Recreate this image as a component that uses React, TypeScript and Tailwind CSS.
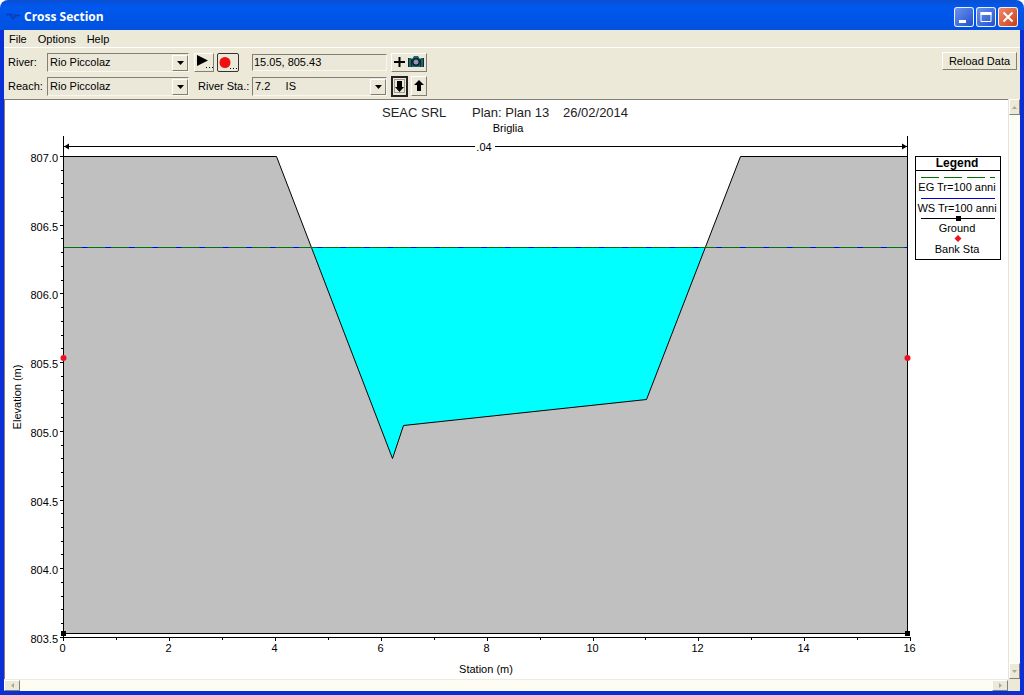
import React, { useState } from "react";

type Point = [number, number];

// station (m) -> x, elevation (m) -> y
const sx = (station: number) => Math.round(63 + station * 52.95) + 0.5;
const sy = (elevation: number) => Math.round(156 + (807 - elevation) * 137.4) + 0.5;

const ground: Point[] = [
  [63.5, 156.5],
  [276.5, 156.5],
  [392.5, 458.5],
  [403.5, 425.5],
  [646.5, 399.5],
  [740.5, 156.5],
  [907.5, 156.5],
];

const water: Point[] = [
  [311.5, 247.5],
  [392.5, 458.5],
  [403.5, 425.5],
  [646.5, 399.5],
  [705.5, 247.5],
];

const toPoints = (pts: Point[]) => pts.map((p) => p.join(",")).join(" ");

const elevations = Array.from({ length: 36 }, (_, i) => 803.5 + i / 10);
const stations = Array.from({ length: 17 }, (_, i) => i);

const raised = "border border-t-white border-l-white border-r-[#808076] border-b-[#808076] bg-[#ece9d8]";
const sunken = "border border-t-[#808076] border-l-[#808076] border-r-[#f8f7f0] border-b-[#f8f7f0] bg-[#ebe8d9]";

function Dropdown({ id, options }: { id: string; options: string[] }) {
  return (
    <div className="relative h-[19px] w-full">
      <select
        id={id}
        className={`h-full w-full appearance-none pl-[2px] pr-5 text-[11px] leading-4 outline-none ${sunken}`}
      >
        {options.map((o) => (
          <option key={o}>{o}</option>
        ))}
      </select>
      <span
        className={`pointer-events-none absolute top-[2px] right-[1px] bottom-[1px] flex w-4 items-center justify-center ${raised}`}
      >
        <svg width="7" height="4" viewBox="0 0 7 4" aria-hidden="true">
          <path d="M0 0h7L3.5 4z" fill="#000" />
        </svg>
      </span>
    </div>
  );
}

function TitleBar() {
  const caption = "flex h-5 w-5 items-center justify-center rounded-[3px] border border-white/90";
  return (
    <header className="flex h-[30px] items-center justify-between rounded-t-lg bg-linear-to-b from-[#0a4fd0] via-[#0058ee] via-20% to-[#0052e0] pt-[3px] pr-[6px] pl-[6px]">
      <div className="flex items-center gap-1">
        <svg width="14" height="10" viewBox="0 0 14 10" aria-hidden="true">
          <path d="M0 2.500h4l3 4 3-3h4" fill="none" stroke="#0a3cb8" strokeWidth="1.5" />
          <path d="M4 3h7" stroke="#0a3cb8" />
        </svg>
        <h1 className="font-['Open_Sans','Noto_Sans',sans-serif] text-xs font-bold text-white">Cross Section</h1>
      </div>
      <div className="flex gap-[2px]">
        <button aria-label="Minimize" className={`${caption} bg-linear-to-br from-[#6d92ee] to-[#1d50cc]`}>
          <svg width="18" height="18" viewBox="0 0 18 18">
            <path d="M4 12h7v3H4z" fill="#fff" />
          </svg>
        </button>
        <button aria-label="Maximize" className={`${caption} bg-linear-to-br from-[#6d92ee] to-[#1d50cc]`}>
          <svg width="18" height="18" viewBox="0 0 18 18">
            <path d="M4 4.5h10v9H4z" fill="none" stroke="#fff" />
            <path d="M3.500 4h11v3h-11z" fill="#fff" />
          </svg>
        </button>
        <button aria-label="Close" className={`${caption} bg-linear-to-br from-[#ec8a6c] to-[#cc3a12]`}>
          <svg width="18" height="18" viewBox="0 0 18 18">
            <path d="M4.500 4.500l9 9M13.500 4.500l-9 9" stroke="#fff" strokeWidth="2" />
          </svg>
        </button>
      </div>
    </header>
  );
}

function Toolbar() {
  const [cursor, setCursor] = useState("15.05, 805.43");

  return (
    <div className="flex items-start justify-between border-t border-white pt-[2px] pr-[3px] pb-[1px] pl-1">
      <div className="grid auto-rows-[24px] grid-cols-[39px_142px_63px_135px_auto] items-center">
        <label htmlFor="river">River:</label>
        <Dropdown id="river" options={["Rio Piccolaz"]} />
        <div className="flex gap-[3px] pl-[5px]">
          <button aria-label="Play" className={`h-[19px] w-5 ${raised}`}>
            <svg width="18" height="17" viewBox="0 0 18 17">
              <path d="M2 1l11 5.500L2 12z" fill="#000" />
              <path d="M11 13.500h1M14 13.500h1M17 13.500h1" stroke="#000" />
            </svg>
          </button>
          <button
            aria-label="Record"
            className="h-[19px] w-[22px] rounded-[2px] border border-[#333] bg-[#ece9d8]"
          >
            <svg width="20" height="17" viewBox="0 0 20 17">
              <circle cx="7" cy="8.500" r="5.500" fill="#f01010" />
              <path d="M12 14.500h1M15 14.500h1M18 14.500h1" stroke="#000" />
            </svg>
          </button>
        </div>
        <input
          aria-label="Cursor position"
          value={cursor}
          onChange={(e) => setCursor(e.target.value)}
          className={`h-[17px] w-full pl-[1px] text-[11px] outline-none ${sunken}`}
        />
        <div className="flex pl-1">
          <button aria-label="Add snapshot" className={`h-[19px] w-9 ${raised}`}>
            <svg width="34" height="17" viewBox="0 0 34 17">
              <path d="M2 8h11M7.500 3v10" stroke="#000" strokeWidth="2" />
              <path d="M16 4h3l1 1 2-3h4l2 3 1-1h3v9H16z" fill="#1b6670" />
              <path d="M16.500 4v9M19.500 5v8M28.500 5v8M31.500 4v9" stroke="#0b2d33" />
              <circle cx="24" cy="8" r="4" fill="#131c24" />
              <circle cx="24" cy="8" r="2.500" fill="#8e98ac" />
            </svg>
          </button>
        </div>

        <label htmlFor="reach">Reach:</label>
        <Dropdown id="reach" options={["Rio Piccolaz"]} />
        <label htmlFor="station" className="pl-[9px] whitespace-nowrap">
          River Sta.:
        </label>
        <Dropdown id="station" options={["7.2\u00a0\u00a0\u00a0\u00a0\u00a0IS"]} />
        <div className="flex gap-[3px] pl-1">
          <button aria-label="Next station down" className="h-[21px] w-[17px] border-2 border-[#222] bg-[#ece9d8]">
            <svg width="13" height="17" viewBox="0 0 13 17">
              <path d="M1.500 1.500h10v13h-10z" fill="none" stroke="#555" strokeDasharray="1 1" />
              <path d="M4 3h5v6h2l-4.500 5L2 9h2z" fill="#000" />
            </svg>
          </button>
          <button aria-label="Next station up" className={`h-5 w-4 ${raised}`}>
            <svg width="14" height="18" viewBox="0 0 14 18">
              <path d="M7 3l5 5H9v6H5V8H2z" fill="#000" />
            </svg>
          </button>
        </div>
      </div>
      <button className={`mt-[2px] h-[18px] w-[75px] text-[11px] leading-4 ${raised}`}>Reload Data</button>
    </div>
  );
}

function Legend() {
  return (
    <g textAnchor="middle">
      <rect x="915.5" y="156.5" width="85" height="103" fill="#fff" stroke="#000" />
      <path d="M915 170.500h86" stroke="#000" />
      <text x="957" y="167" className="text-[12px] font-bold">
        Legend
      </text>
      <path d="M921 177.500h74" stroke="#007000" strokeDasharray="18 5" />
      <text x="957" y="191">EG Tr=100 anni</text>
      <path d="M921 198.500h74" stroke="#0000d8" />
      <text x="957" y="212">WS Tr=100 anni</text>
      <path d="M921 218.500h74" stroke="#000" />
      <rect x="956" y="216" width="5" height="5" />
      <text x="957" y="232">Ground</text>
      <path d="M958 235l3.500 3.500-3.500 3.500-3.500-3.500z" fill="#f01020" />
      <text x="957" y="253">Bank Sta</text>
    </g>
  );
}

function CrossSectionChart() {
  return (
    <svg
      viewBox="5 100 1003 579"
      role="img"
      aria-label="Cross section"
      className="min-w-0 flex-1 bg-white text-[11px]"
    >
      {/* titles */}
      <g className="text-[13px]" fill="#222">
        <text x="382" y="117">SEAC SRL</text>
        <text x="472" y="117">Plan: Plan 13</text>
        <text x="563" y="117">26/02/2014</text>
      </g>
      <text x="508" y="132" textAnchor="middle">
        Briglia
      </text>

      {/* terrain and water */}
      <polygon points={`63.5,633.5 ${toPoints(ground)} 907.5,633.5`} fill="#c0c0c0" />
      <polygon points={toPoints(water)} fill="#00ffff" />
      <polyline points={toPoints(ground)} fill="none" stroke="#000" />
      <path d="M64 247.500H907" stroke="#0000ff" />
      <path d="M64 247.500H907" stroke="#007010" strokeDasharray="18 5.500" />
      <path d="M63 633.500H907" stroke="#000" />

      {/* Manning's n extent */}
      <path d="M64 146.500H475M495 146.500H907" stroke="#000" />
      <path d="M64 146.500l5-3v6zM907 146.500l-5-3v6z" />
      <text x="484" y="151" textAnchor="middle">
        .04
      </text>
      <path d="M63.500 136V641M907.500 136V633" stroke="#000" />

      {/* elevation axis */}
      {elevations.map((e, i) => (
        <path key={i} d={`M${i % 5 === 0 ? 60 : 61} ${sy(e)}H63`} stroke="#000" />
      ))}
      {elevations
        .filter((_, i) => i % 5 === 0)
        .map((e) => (
          <text key={e} x="58" y={sy(e) + 5} textAnchor="end">
            {e.toFixed(1)}
          </text>
        ))}
      <text transform="translate(21 397) rotate(-90)" textAnchor="middle">
        Elevation (m)
      </text>

      {/* station axis */}
      <path d="M60 637.500H911" stroke="#000" />
      {stations.map((s) => (
        <path key={s} d={`M${sx(s)} 638V${s % 2 === 0 ? 641 : 640}`} stroke="#000" />
      ))}
      {stations
        .filter((s) => s % 2 === 0)
        .map((s) => (
          <text key={s} x={sx(s) - 1} y="652" textAnchor="middle">
            {s}
          </text>
        ))}
      <text x="486" y="673" textAnchor="middle">
        Station (m)
      </text>

      {/* ground end points and bank stations */}
      <rect x="61" y="631" width="5" height="5" />
      <rect x="905" y="631" width="5" height="5" />
      <circle cx="63.500" cy="358" r="3" fill="#f01020" />
      <circle cx="907.500" cy="358" r="3" fill="#f01020" />

      <Legend />
    </svg>
  );
}

function ScrollButton({ label, path, className }: { label: string; path: string; className: string }) {
  return (
    <button aria-label={label} className={`flex items-center justify-center ${raised} ${className}`}>
      <svg width="5" height="5" viewBox="0 0 5 5">
        <path d={path} fill="#aca899" />
      </svg>
    </button>
  );
}

export default function App() {
  return (
    <div className="flex min-h-screen flex-col bg-white font-['Liberation_Sans',Arial,sans-serif] text-[11px] leading-4 text-black">
      <TitleBar />
      <div className="flex flex-1 flex-col border-x-4 border-b-4 border-[#0a2fd6] bg-[#ece9d8]">
        <nav className="flex h-[17px] items-center gap-[11px] pl-[5px]">
          <button>File</button>
          <button>Options</button>
          <button>Help</button>
        </nav>
        <Toolbar />
        <main className="flex flex-1 flex-col">
          <div className="flex flex-1">
            <div className="flex min-w-0 flex-1 border-t border-l border-[#808076]">
              <CrossSectionChart />
            </div>
            <div className="flex w-3 flex-col justify-between border-l border-[#e6e4da] bg-[#fdfdf8]">
              <ScrollButton label="Scroll up" path="M2.500 1L5 4H0z" className="h-4 w-full" />
              <ScrollButton label="Scroll down" path="M2.500 4L5 1H0z" className="h-4 w-full" />
            </div>
          </div>
          <div className="flex h-3">
            <div className="flex flex-1 justify-between border-t border-[#eeece2] bg-[#fdfdf4]">
              <ScrollButton label="Scroll left" path="M1 2.500L4 0v5z" className="h-full w-4" />
              <ScrollButton label="Scroll right" path="M4 2.500L1 0v5z" className="h-full w-4" />
            </div>
            <div className="w-3 bg-[#ece9d8]" />
          </div>
        </main>
      </div>
    </div>
  );
}
